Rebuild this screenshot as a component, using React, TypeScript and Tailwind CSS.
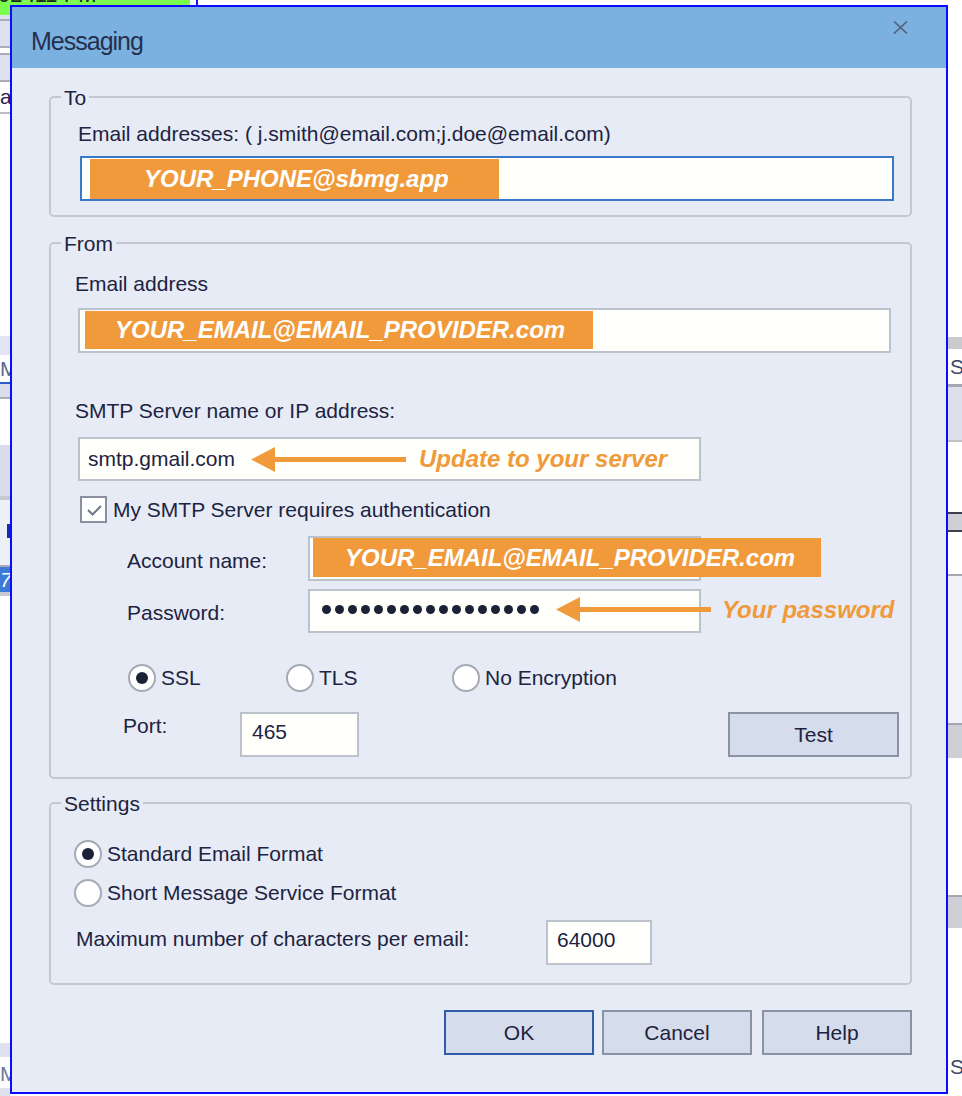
import React from 'react';

// Generic pieces of the old-style Windows dialog

type BoxProps = { title: string; className?: string; children: React.ReactNode };

const GroupBox = ({ title, className = '', children }: BoxProps) => (
  <div className={`relative border-2 border-[#c3c8d1] rounded-[5px] ${className}`}>
    <span className="absolute -top-[12px] left-[10px] px-[3px] bg-[#e6ebf6] leading-[24px]">{title}</span>
    {children}
  </div>
);

const Field = ({ className = '', children }: { className?: string; children?: React.ReactNode }) => (
  <div className={`shrink-0 border-2 border-[#bcc2cc] bg-[#fffffb] whitespace-nowrap ${className}`}>{children}</div>
);

const OrangeTag = ({ text, className = '' }: { text: string; className?: string }) => (
  <div
    className={`shrink-0 bg-[#f09a3b] flex items-center text-white font-bold italic text-[24px] leading-none whitespace-nowrap ${className}`}
  >
    {text}
  </div>
);

const Radio = ({ checked = false }: { checked?: boolean }) => (
  <span className="w-[28px] h-[28px] shrink-0 rounded-full border-2 border-[#a5aab4] bg-white flex items-center justify-center">
    {checked && <span className="w-[12px] h-[12px] rounded-full bg-[#1b2236]" />}
  </span>
);

const Arrow = ({ className = '' }: { className?: string }) => (
  <svg className={`shrink-0 ${className}`} width="155" height="25" viewBox="0 0 155 25">
    <polygon points="0,12.5 24,0 24,25" fill="#f09a3b" />
    <rect x="23" y="10" width="132" height="5" fill="#f09a3b" />
  </svg>
);

const Button = ({ label, className = '' }: { label: string; className?: string }) => (
  <button className={`shrink-0 h-[45px] border-2 bg-[#d5dcec] ${className}`}>{label}</button>
);

// Bits of the application window that peek out behind the dialog
const LeftEdge = () => (
  <div className="w-[10px] shrink-0 flex flex-col overflow-hidden text-[21px] leading-[24px]">
    <div className="h-[10px] bg-[#7cfb4f]" />
    <div className="h-[4px] bg-[#dfe2ee]" />
    <div className="h-[2px] bg-[#a9adb5]" />
    <div className="h-[25px] bg-[#dde0ee]" />
    <div className="h-[2px] bg-[#a9adb5]" />
    <div className="h-[5px] bg-white" />
    <div className="h-[2px] bg-[#a9adb5]" />
    <div className="h-[25px] bg-[#dde0ee]" />
    <div className="h-[2px] bg-[#a9adb5]" />
    <div className="h-[30px] bg-white flex items-center text-[#2a2050]">a</div>
    <div className="h-[2px] bg-[#b8bcc4]" />
    <div className="h-[222px] bg-white" />
    <div className="h-[19px] bg-[#e3e6f2]" />
    <div className="h-[27px] bg-white flex items-center text-[#5a6a8a]">M</div>
    <div className="h-[2px] bg-[#2c5bd0]" />
    <div className="h-[13px] bg-[#dadeeb]" />
    <div className="h-[2px] bg-[#a9adb5]" />
    <div className="h-[46px] bg-white" />
    <div className="h-[51px] bg-[#d9dcea]" />
    <div className="h-[4px] bg-[#c7c9d0]" />
    <div className="h-[65px] bg-[#eef0f7] flex items-center justify-end pb-[4px]">
      <div className="w-[3px] h-[14px] bg-[#1a2ab0]" />
    </div>
    <div className="h-[2px] bg-[#a9adb5]" />
    <div className="h-[25px] bg-[#3b7ad6] flex items-center text-white italic">7</div>
    <div className="h-[4px] bg-[#c7c9d0]" />
    <div className="h-[447px] bg-white" />
    <div className="h-[14px] bg-[#dfe2ee]" />
    <div className="h-[3px] bg-white" />
    <div className="h-[28px] bg-white flex items-center text-[#6a7898]">M</div>
    <div className="flex-1 bg-[#dfe2ee]" />
  </div>
);

const RightEdge = () => (
  <div className="w-[14px] shrink-0 flex flex-col overflow-hidden text-[21px] leading-[24px]">
    <div className="h-[332px] bg-white" />
    <div className="h-[12px] bg-[#c9c9ce]" />
    <div className="h-[35px] bg-white flex items-center pl-[2px] text-[#3a4868]">S</div>
    <div className="h-[3px] bg-[#a4a8b0]" />
    <div className="h-[53px] bg-[#dde0ec]" />
    <div className="h-[2px] bg-[#c0c2c8]" />
    <div className="h-[70px] bg-white" />
    <div className="h-[2px] bg-[#3a4050]" />
    <div className="h-[16px] bg-[#cfd0d5]" />
    <div className="h-[2px] bg-[#3a4050]" />
    <div className="h-[42px] bg-white" />
    <div className="h-[2px] bg-[#a4a8b0]" />
    <div className="h-[147px] bg-[#f2f3f8]" />
    <div className="h-[2px] bg-[#a4a8b0]" />
    <div className="h-[33px] bg-[#cfd0d5]" />
    <div className="h-[137px] bg-white" />
    <div className="h-[2px] bg-[#a4a8b0]" />
    <div className="h-[31px] bg-[#cfd0d5]" />
    <div className="h-[125px] bg-white" />
    <div className="h-[28px] bg-white flex items-center pl-[2px] text-[#3a4868]">S</div>
    <div className="flex-1 bg-white" />
  </div>
);

const Dialog = () => (
  <div className="w-[938px] h-[1089px] shrink-0 border-2 border-[#0b0bff] bg-[#e6ebf6] flex flex-col">
    {/* Title bar */}
    <div className="h-[61px] shrink-0 bg-[#7bb1e1] flex items-center pt-[6px] pl-[19px]">
      <span className="text-[25px] leading-[28px] tracking-[-1px] text-[#25304c]">Messaging</span>
      <svg className="ml-auto mr-[38px] self-start mt-[8px]" width="15" height="13" viewBox="0 0 15 13">
        <path d="M1 0.5 L14 12.5 M14 0.5 L1 12.5" stroke="#55637a" strokeWidth="1.7" fill="none" />
      </svg>
    </div>

    <div className="flex flex-col pl-[37px] pr-[34px] pt-[28px]">
      {/* To */}
      <GroupBox title="To" className="h-[121px] pt-[24px] pl-[27px] pr-[16px]">
        <div className="whitespace-nowrap">Email addresses: ( j.smith@email.com;j.doe@email.com)</div>
        <div className="mt-[10px] ml-[2px] h-[45px] border-2 border-[#3a78c8] bg-[#fffffb] flex items-start">
          <OrangeTag text="YOUR_PHONE@sbmg.app" className="ml-[8px] mt-[1px] w-[409px] h-[40px] pl-[54px]" />
        </div>
      </GroupBox>

      {/* From */}
      <GroupBox title="From" className="mt-[25px] h-[537px] pt-[28px] pl-[24px]">
        <div>Email address</div>
        <Field className="mt-[12px] ml-[3px] w-[813px] h-[45px] flex items-start">
          <OrangeTag text="YOUR_EMAIL@EMAIL_PROVIDER.com" className="ml-[5px] mt-[1px] w-[508px] h-[38px] pl-[30px]" />
        </Field>

        <div className="mt-[46px]">SMTP Server name or IP address:</div>
        <Field className="mt-[14px] ml-[3px] w-[623px] h-[44px] flex items-center pl-[8px]">
          <span className="shrink-0">smtp.gmail.com</span>
          <Arrow className="ml-[16px]" />
          <span className="shrink-0 ml-[13px] text-[#f09a3b] font-bold italic text-[24px]">Update to your server</span>
        </Field>

        <div className="mt-[15px] ml-[5px] flex items-center">
          <span className="w-[27px] h-[27px] shrink-0 border-2 border-[#8a90a0] bg-white">
            <svg width="23" height="23" viewBox="0 0 23 23">
              <path d="M6 12 L10.5 16.5 L19 8" stroke="#6f7787" strokeWidth="2" fill="none" />
            </svg>
          </span>
          <span className="ml-[6px] whitespace-nowrap">My SMTP Server requires authentication</span>
        </div>

        <div className="mt-[13px] flex items-start">
          <span className="ml-[52px] w-[181px] shrink-0 mt-[13px]">Account name:</span>
          <Field className="w-[393px] h-[45px] flex items-start">
            <OrangeTag text="YOUR_EMAIL@EMAIL_PROVIDER.com" className="ml-[3px] w-[508px] h-[39px] pl-[32px]" />
          </Field>
        </div>

        <div className="mt-[8px] flex items-start">
          <span className="ml-[52px] w-[181px] shrink-0 mt-[12px]">Password:</span>
          <Field className="w-[393px] h-[44px] flex items-center pl-[12px] pb-[3px]">
            <div className="flex gap-[4px] shrink-0">
              {Array.from({ length: 17 }).map((_, i) => (
                <span key={i} className="w-[9px] h-[9px] rounded-full bg-[#1b2236]" />
              ))}
            </div>
            <Arrow className="ml-[17px]" />
            <span className="shrink-0 ml-[11px] text-[#f09a3b] font-bold italic text-[24px]">Your password</span>
          </Field>
        </div>

        <div className="mt-[31px] ml-[53px] flex items-center">
          <div className="w-[158px] flex items-center gap-[5px]">
            <Radio checked />
            SSL
          </div>
          <div className="w-[166px] flex items-center gap-[5px]">
            <Radio />
            TLS
          </div>
          <div className="flex items-center gap-[5px]">
            <Radio />
            No Encryption
          </div>
        </div>

        <div className="mt-[20px] flex items-start pr-[11px]">
          <span className="ml-[48px] w-[117px] shrink-0 mt-[2px]">Port:</span>
          <Field className="w-[119px] h-[45px] flex items-center pl-[10px] pb-[6px]">465</Field>
          <Button label="Test" className="ml-auto w-[171px] border-[#8a93a3]" />
        </div>
      </GroupBox>

      {/* Settings */}
      <GroupBox title="Settings" className="mt-[23px] h-[183px] pt-[36px] pl-[23px]">
        <div className="flex items-center gap-[5px]">
          <Radio checked />
          Standard Email Format
        </div>
        <div className="mt-[11px] flex items-center gap-[5px]">
          <Radio />
          Short Message Service Format
        </div>
        <div className="mt-[13px] flex items-start">
          <span className="ml-[2px] w-[470px] shrink-0 mt-[7px] whitespace-nowrap">Maximum number of characters per email:</span>
          <Field className="w-[106px] h-[45px] flex items-center pl-[9px] pb-[5px]">64000</Field>
        </div>
      </GroupBox>

      {/* Dialog buttons */}
      <div className="mt-[25px] flex justify-end">
        <Button label="OK" className="w-[150px] border-[#2f5cab]" />
        <Button label="Cancel" className="ml-[8px] w-[150px] border-[#8a93a3]" />
        <Button label="Help" className="ml-[10px] w-[150px] border-[#8a93a3]" />
      </div>
    </div>
  </div>
);

export default function App() {
  return (
    <div className="w-[962px] h-[1096px] overflow-hidden bg-white flex flex-col font-['Liberation_Sans',Arial,sans-serif] text-[21px] leading-[24px] text-[#1d2340]">
      {/* top edge of the window behind */}
      <div className="h-[5px] shrink-0 flex overflow-hidden">
        <div className="w-[190px] shrink-0 bg-[#7cfb4f] overflow-hidden">
          <div className="-mt-[17px] -ml-[2px] text-[22px] whitespace-nowrap text-[#1b2a1b]">02 :11 PM</div>
        </div>
        <div className="w-[6px] shrink-0 bg-white" />
        <div className="w-[2px] shrink-0 bg-[#1212ff]" />
        <div className="flex-1 bg-white" />
      </div>
      <div className="flex h-[1091px] shrink-0">
        <LeftEdge />
        <Dialog />
        <RightEdge />
      </div>
    </div>
  );
}
